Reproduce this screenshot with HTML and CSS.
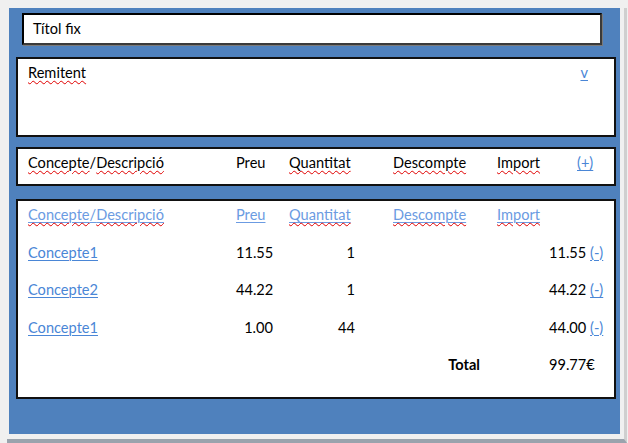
FILE: index.html
```html
<!DOCTYPE html>
<html lang="ca">
<head>
<meta charset="utf-8">
<title>Factura</title>
<link rel="stylesheet" href="styles.css">
</head>
<body>
<div class="shell">
  <div class="frame">
    <div class="title-box">Títol fix</div>

    <div class="box sender">
      <span class="sp">Remitent</span>
      <a href="#" class="link toggle">v</a>
    </div>

    <div class="box header-box">
      <div class="grid head-grid">
        <span><span class="sp">Concepte</span>/<span class="sp">Descripció</span></span>
        <span>Preu</span>
        <span class="sp">Quantitat</span>
        <span class="sp">Descompte</span>
        <span class="sp">Import</span>
        <a href="#" class="link">(+)</a>
      </div>
    </div>

    <div class="box table-box">
      <div class="grid rows-grid">
        <a href="#" class="link light"><span class="sp">Concepte</span>/<span class="sp">Descripció</span></a>
        <a href="#" class="link light">Preu</a>
        <a href="#" class="link light"><span class="sp">Quantitat</span></a>
        <a href="#" class="link light"><span class="sp">Descompte</span></a>
        <a href="#" class="link light imp-head"><span class="sp">Import</span></a>

        <a href="#" class="link">Concepte1</a>
        <span class="num price">11.55</span>
        <span class="num qty">1</span>
        <span></span>
        <span></span>
        <span class="amount">11.55 <a href="#" class="link">(-)</a></span>

        <a href="#" class="link">Concepte2</a>
        <span class="num price">44.22</span>
        <span class="num qty">1</span>
        <span></span>
        <span></span>
        <span class="amount">44.22 <a href="#" class="link">(-)</a></span>

        <a href="#" class="link">Concepte1</a>
        <span class="num price">1.00</span>
        <span class="num qty">44</span>
        <span></span>
        <span></span>
        <span class="amount">44.00 <a href="#" class="link">(-)</a></span>

        <span></span>
        <span></span>
        <span></span>
        <span class="num total-label">Total</span>
        <span></span>
        <span class="amount">99.77€</span>
      </div>
    </div>
  </div>
</div>
</body>
</html>
```

FILE: styles.css
```css
html, body {
  margin: 0;
  padding: 0;
}

body {
  background: #f0f0f0;
  font-family: Lato, "Open Sans", sans-serif;
  font-size: 14.6px;
  line-height: 18px;
  color: #000;
}

.shell {
  margin: 8px 0 0 7px;
  width: 615px;
  padding: 0 0 5px 2px;
  box-sizing: content-box;
  border-right: 3px solid #cfcfcf;
  border-bottom: 4px solid #9aa3ad;
}

.frame {
  background: #4f81bd;
  width: 611px;
  height: 426px;
  box-sizing: border-box;
  padding: 5px 0 0 7px;
}

.title-box {
  margin-left: 6px;
  width: 580px;
  height: 32px;
  box-sizing: border-box;
  background: #fff;
  border: 2px solid #000;
  border-right-color: #3a3a3a;
  border-bottom-color: #3a3a3a;
  box-shadow: 1px 1px 0 #7a7a7a;
  padding: 5px 9px 0;
  line-height: 18px;
}

.box {
  width: 600px;
  box-sizing: border-box;
  background: #fff;
  border: 2px solid #111;
}

.sender {
  margin-top: 12px;
  height: 80px;
  padding: 5px 26px 0 10px;
  display: flex;
  justify-content: space-between;
  align-items: flex-start;
}

.header-box {
  margin-top: 10px;
  height: 39px;
  padding: 5px 10px 0;
}

.table-box {
  margin-top: 13px;
  height: 200px;
  padding: 5px 10px 0;
}

.grid {
  display: grid;
  grid-auto-rows: 18px;
}

.head-grid {
  grid-template-columns: 208px 53px 104px 104px 80px auto;
}

.rows-grid {
  grid-template-columns: 208px 53px 104px 104px 52px auto;
  row-gap: 19.5px;
}

.imp-head {
  grid-column: 5 / span 2;
  justify-self: start;
}

.link {
  color: #4a86d6;
  text-decoration: underline;
  text-decoration-thickness: 1px;
  text-underline-offset: 2px;
  justify-self: start;
}

.link.light {
  color: #6b9be2;
}

.sp {
  text-decoration: underline wavy #e00000;
  text-decoration-thickness: 1px;
  text-underline-offset: 2px;
}

.num {
  text-align: right;
}

.price {
  padding-right: 16px;
}

.qty {
  padding-right: 38px;
}

.total-label {
  font-weight: bold;
  padding-right: 17px;
}

.amount {
  white-space: nowrap;
}
```
